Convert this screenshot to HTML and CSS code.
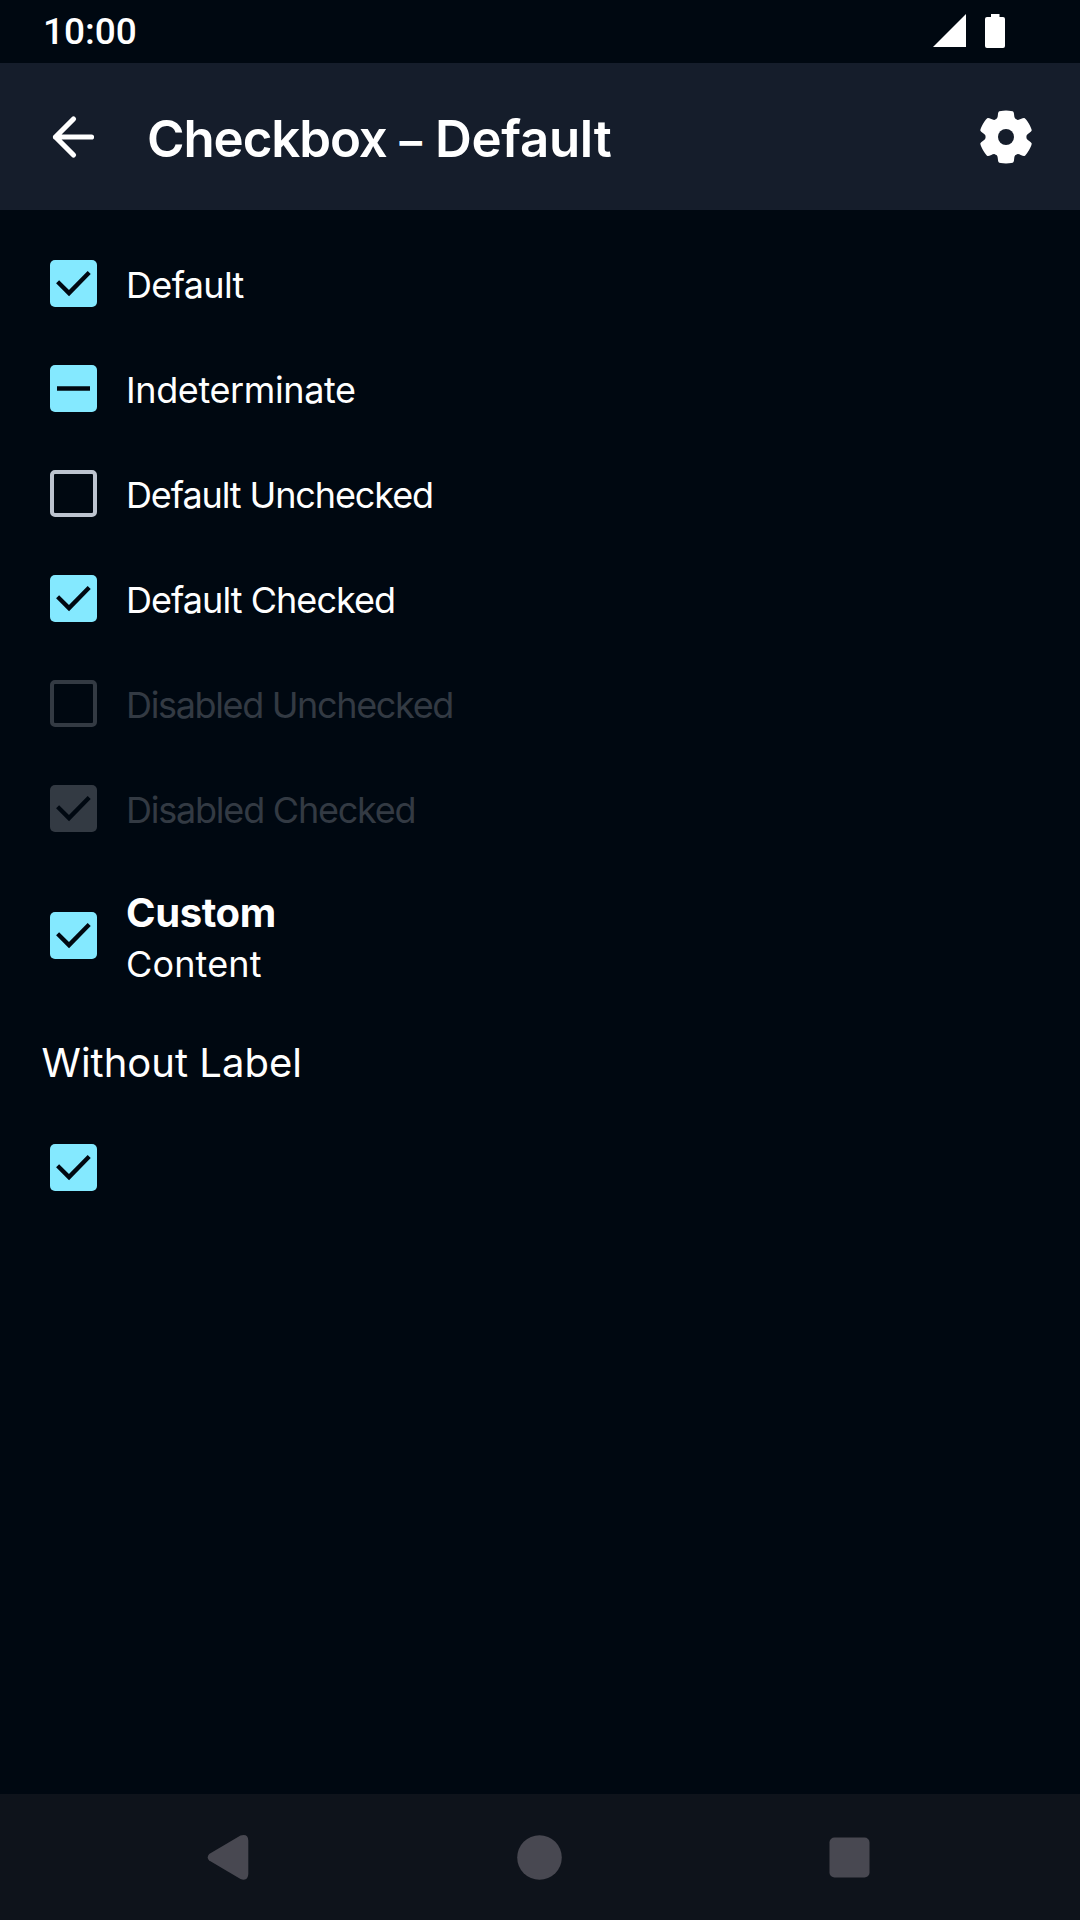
FILE: index.html
```html
<!DOCTYPE html>
<html lang="en">
<head>
<meta charset="utf-8">
<title>Checkbox – Default</title>
<link rel="stylesheet" href="styles.css">
</head>
<body>
<svg class="defs" aria-hidden="true">
  <symbol id="check" viewBox="0 0 47 47"><path d="M7.6 21.8 19 33.1 39.2 12.6" fill="none" stroke="#000811" stroke-width="4.3"/></symbol>
  <symbol id="dash" viewBox="0 0 47 47"><path d="M7 23.5H40" stroke="#000811" stroke-width="4.6"/></symbol>
</svg>
<div class="screen">
  <div class="status-bar">
    <span class="time">10:00</span>
    <div class="status-icons">
      <svg class="signal" viewBox="0 0 33 33"><path d="M0 33 33 0V33Z"/></svg>
      <svg class="battery" viewBox="0 0 20 34"><path d="M6 0H14.5V3H18Q20 3 20 5V32Q20 34 18 34H2Q0 34 0 32V5Q0 3 2 3H6Z"/></svg>
    </div>
  </div>
  <header class="app-bar">
    <svg class="back" viewBox="0 0 44 44"><path d="M40.5 22H4.5M22.5 4 4.5 22 22.5 40"/></svg>
    <h1 class="title"><span class="title-component">Checkbox</span> <span class="title-dash">–</span> <span class="title-variant">Default</span></h1>
    <svg class="settings" viewBox="-90 -90 180 180">
      <defs><path id="tooth" d="M0 0 -31 -52.5C-25.5 -55.5 -25 -60 -24.5 -65Q-24 -74 -22 -76Q-20 -79 0 -79.5Q20 -79 22 -76Q24 -74 24.5 -65C25 -60 25.5 -55.5 31 -52.5Z"/></defs>
      <circle r="60"/>
      <use href="#tooth"/>
      <use href="#tooth" transform="rotate(60)"/>
      <use href="#tooth" transform="rotate(120)"/>
      <use href="#tooth" transform="rotate(180)"/>
      <use href="#tooth" transform="rotate(240)"/>
      <use href="#tooth" transform="rotate(300)"/>
      <circle class="hub" r="24"/>
    </svg>
  </header>
  <main class="content">
    <div class="row"><span class="box checked"><svg><use href="#check"/></svg></span><span class="label default">Default</span></div>
    <div class="row"><span class="box checked"><svg><use href="#dash"/></svg></span><span class="label indeterminate">Indeterminate</span></div>
    <div class="row"><span class="box"></span><span class="label default-unchecked">Default Unchecked</span></div>
    <div class="row"><span class="box checked"><svg><use href="#check"/></svg></span><span class="label default-checked">Default Checked</span></div>
    <div class="row disabled"><span class="box"></span><span class="label disabled-unchecked">Disabled Unchecked</span></div>
    <div class="row disabled"><span class="box checked"><svg><use href="#check"/></svg></span><span class="label disabled-checked">Disabled Checked</span></div>
    <div class="row custom">
      <span class="box checked"><svg><use href="#check"/></svg></span>
      <div class="custom-content">
        <strong class="custom-title">Custom</strong>
        <span class="custom-text">Content</span>
      </div>
    </div>
    <h2 class="section-title">Without Label</h2>
    <div class="row"><span class="box checked"><svg><use href="#check"/></svg></span></div>
  </main>
  <nav class="nav-bar">
    <svg viewBox="0 0 48 48"><path d="M2.2 21Q-.8 24.5 2.2 27.5L33.5 46.1Q41 48.5 41.3 41V7.5Q41 .5 33.5 2.6Z"/></svg>
    <svg viewBox="0 0 48 48"><circle cx="23.5" cy="24.5" r="22.3"/></svg>
    <svg viewBox="0 0 48 48"><rect x="4.5" y="4.5" width="40" height="40" rx="5"/></svg>
  </nav>
</div>
</body>
</html>
```
FILE: styles.css
```css
* { box-sizing: border-box; }

body {
  margin: 0;
  background: #000811;
  color: #fff;
  font-family: Inter, "Liberation Sans", sans-serif;
}

svg { display: block; }

.defs { display: none; }

.screen {
  display: flex;
  flex-direction: column;
  width: 1080px;
  height: 1920px;
}

.status-bar {
  display: flex;
  align-items: center;
  justify-content: space-between;
  height: 63px;
  padding: 0 75px 0 43px;
}

.time { font: 500 37px/63px Roboto, sans-serif; }

.status-icons {
  display: flex;
  align-items: flex-end;
  gap: 19px;
  height: 34px;
  margin-top: -1px;
  fill: #fff;
}

.signal { width: 33px; height: 33px; margin-bottom: 1px; }
.battery { width: 20px; height: 34px; }

.app-bar {
  display: flex;
  align-items: center;
  height: 147px;
  padding: 0 44px 0 51px;
  background: #151d2b;
}

.back {
  width: 44px;
  height: 44px;
  fill: none;
  stroke: #fff;
  stroke-width: 5.2;
  stroke-linecap: round;
  stroke-linejoin: round;
}

.title {
  flex: 1;
  margin: 0;
  padding: 7px 0 0 52px;
  font-size: 51px;
  font-weight: 600;
  line-height: 60px;
}

.title-component { letter-spacing: -1.1px; }
.title-dash { font-size: 45px; }
.title-variant { letter-spacing: -0.3px; }

.settings {
  width: 60px;
  height: 60px;
  fill: #fff;
}

.hub { fill: #151d2b; }

.content {
  flex: 1;
  padding-top: 21px;
}

.row {
  display: flex;
  align-items: center;
  gap: 29px;
  height: 105px;
  padding-left: 50px;
}

.box {
  width: 47px;
  height: 47px;
  border: 4px solid #bdc4cf;
  border-radius: 5px;
}

.box.checked {
  border: 0;
  background: #84e9ff;
}

.box svg { width: 47px; height: 47px; }

.label {
  padding-top: 3px;
  font-size: 36px;
  line-height: 48px;
  white-space: nowrap;
}

.default { letter-spacing: -0.65px; }
.indeterminate { letter-spacing: -0.38px; }
.default-unchecked { letter-spacing: -1.11px; }
.default-checked { letter-spacing: -0.96px; }
.disabled-unchecked { letter-spacing: -1.35px; }
.disabled-checked { letter-spacing: -1.22px; }

.disabled { color: #333a43; }
.disabled .box { border-color: #333a43; }
.disabled .box.checked { background: #333a43; }

.custom { height: 149px; }

.custom-content {
  display: flex;
  flex-direction: column;
  padding-top: 4px;
}

.custom-title {
  font-size: 40px;
  font-weight: 700;
  line-height: 52px;
  letter-spacing: -0.4px;
}

.custom-text {
  font-size: 36px;
  line-height: 50px;
  letter-spacing: 0.15px;
}

.section-title {
  height: 105px;
  margin: 0;
  padding-left: 41.5px;
  font-size: 40px;
  font-weight: 400;
  line-height: 105px;
}

.nav-bar {
  display: flex;
  align-items: center;
  justify-content: space-between;
  height: 126px;
  padding: 0 207px;
  background: #0e131b;
  fill: #484851;
}

.nav-bar svg { width: 48px; height: 48px; }
```
